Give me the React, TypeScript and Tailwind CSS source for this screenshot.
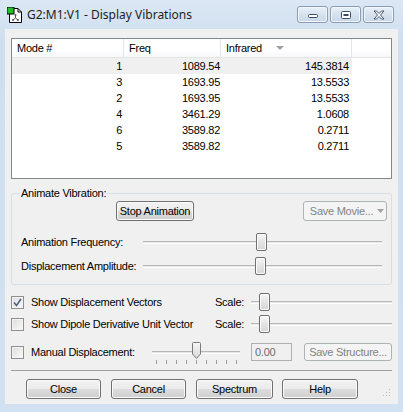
const rows = [
  ["1", "1089.54", "145.3814"],
  ["3", "1693.95", "13.5533"],
  ["2", "1693.95", "13.5533"],
  ["4", "3461.29", "1.0608"],
  ["6", "3589.82", "0.2711"],
  ["5", "3589.82", "0.2711"],
];

const Button = ({
  children,
  className = "",
  disabled = false,
}: {
  children: React.ReactNode;
  className?: string;
  disabled?: boolean;
}) => (
  <div
    className={`flex items-center justify-center rounded-[3px] border ${
      disabled
        ? "border-[#adb2b5] bg-[#f4f4f4] text-[#838383]"
        : "border-[#707070] bg-[linear-gradient(#f2f2f2_0%,#ebebeb_49%,#dddddd_50%,#cfcfcf_100%)] shadow-[inset_0_0_0_1px_#fbfbfb] text-black"
    } ${className}`}
  >
    {children}
  </div>
);

const Thumb = ({ className = "" }: { className?: string }) => (
  <div
    className={`absolute top-0 h-[18px] w-[11px] rounded-[2px] border border-[#707070] bg-[linear-gradient(#f6f6f6,#e4e4e4_50%,#d6d6d6)] shadow-[inset_0_0_0_1px_#fdfdfd] ${className}`}
  />
);

const Track = () => (
  <div className="h-[3px] w-full border-t border-[#b7b7b7] border-b border-b-white bg-[#e7e7e7]" />
);

const Slider = ({ thumb, className = "" }: { thumb: string; className?: string }) => (
  <div className={`relative flex h-[18px] items-center ${className}`}>
    <Track />
    <Thumb className={thumb} />
  </div>
);

const CheckBox = ({ checked = false }: { checked?: boolean }) => (
  <div className="flex h-[13px] w-[13px] shrink-0 items-center justify-center border border-[#8e8f8f] bg-[linear-gradient(135deg,#dcdcdc,#fbfbfb)] shadow-[inset_0_0_0_1px_#f4f4f4]">
    {checked && (
      <svg width="9" height="9" viewBox="0 0 9 9">
        <path d="M1 4.5 L3.5 7.5 L8 1" fill="none" stroke="#4d6185" strokeWidth="1.6" />
      </svg>
    )}
  </div>
);

const TitleButton = ({ children }: { children: React.ReactNode }) => (
  <div className="flex h-[17px] w-[31px] items-center justify-center rounded-[3px] border border-[#8a9bb2] bg-[linear-gradient(#e9f0f8,#d6e2ef_50%,#c8d7e8)] shadow-[inset_0_0_0_1px_#f3f7fb]">
    {children}
  </div>
);

const AppIcon = () => (
  <svg width="16" height="16" viewBox="0 0 16 16">
    <path d="M2.5 1.5 H11 L14.5 5 V15.5 H2.5 Z" fill="#fff" stroke="#000" />
    <path d="M11 1.5 V5 H14.5" fill="none" stroke="#000" />
    <rect x="0" y="0" width="7" height="7" fill="#22c022" stroke="#000" strokeWidth="1" />
    <path d="M8.5 8 V11 M8.5 11 L6 13 M8.5 11 L11 13" stroke="#555" strokeWidth="1" fill="none" />
    <circle cx="8.5" cy="8" r="1" fill="#555" />
    <circle cx="6" cy="13" r="1" fill="#555" />
    <circle cx="11" cy="13" r="1" fill="#555" />
  </svg>
);

const App = () => {
  return (
    <div className="flex h-[412px] w-[403px] flex-col bg-[linear-gradient(#dbe7f4,#cfdff0_40px,#d2e1f1)] font-['Liberation_Sans',Arial,sans-serif] text-[11px] tracking-[-0.25px] text-black">
      {/* title bar */}
      <div className="flex h-[29px] items-center pl-[7px] pr-[9px]">
        <AppIcon />
        <span className="ml-[4px] font-['Noto_Sans',sans-serif] text-[12px] tracking-normal text-[#1e1e1e]">
          G2:M1:V1 - Display Vibrations
        </span>
        <div className="ml-auto flex gap-[2px]">
          <TitleButton>
            <svg width="12" height="8" viewBox="0 0 12 8">
              <rect x="1.5" y="3.5" width="9" height="3" rx="1" fill="#fff" stroke="#3a4a63" />
            </svg>
          </TitleButton>
          <TitleButton>
            <svg width="12" height="10" viewBox="0 0 12 10">
              <rect x="1.5" y="1.5" width="9" height="7" rx="1" fill="#fff" stroke="#3a4a63" />
              <rect x="3.5" y="4" width="5" height="2" fill="#3a4a63" />
            </svg>
          </TitleButton>
          <TitleButton>
            <svg width="12" height="10" viewBox="0 0 12 10">
              <path
                d="M1 1 H3.5 L6 3.5 L8.5 1 H11 L7.5 5 L11 9 H8.5 L6 6.5 L3.5 9 H1 L4.5 5 Z"
                fill="#fff"
                stroke="#3a4a63"
                strokeWidth="0.9"
              />
            </svg>
          </TitleButton>
        </div>
      </div>

      {/* client area */}
      <div className="mx-[5px] mb-[8px] flex flex-1 flex-col bg-[#f0f0f0] px-[6px] pt-[9px]">
        {/* mode list */}
        <div className="h-[141px] border border-[#828790] bg-white">
          <div className="flex h-[19px] border-b border-[#e5e5e5] bg-[linear-gradient(#ffffff,#ffffff_60%,#f7f8fa)]">
            <div className="flex w-[112px] items-center border-r border-[#e3e5e8] pl-[5px]">Mode #</div>
            <div className="flex w-[97px] items-center border-r border-[#e3e5e8] pl-[5px]">Freq</div>
            <div className="flex w-[131px] items-center border-r border-[#e3e5e8] pl-[5px]">
              Infrared
              <svg width="8" height="5" viewBox="0 0 8 5" className="ml-[14px]">
                <path d="M0 0 H8 L4 4 Z" fill="#a0a0a0" />
              </svg>
            </div>
          </div>
          {rows.map(([mode, freq, ir], i) => (
            <div
              key={i}
              className={`flex h-[16px] w-[340px] items-center ${i === 0 ? "bg-[#f0f0f0]" : ""}`}
            >
              <div className="w-[112px] pr-[2px] text-right">{mode}</div>
              <div className="w-[97px] pr-[1px] text-right">{freq}</div>
              <div className="w-[131px] pr-[3px] text-right">{ir}</div>
            </div>
          ))}
        </div>

        {/* animate vibration group */}
        <div className="mt-[14px] h-[92px] rounded-[3px] border border-[#d5dfe5]">
          <div className="-mt-[7px] ml-[8px] w-fit bg-[#f0f0f0] px-[1px] leading-[13px]">
            Animate Vibration:
          </div>
          <div className="mt-[1px] flex pr-[4px]">
            <Button className="ml-[104px] h-[20px] w-[78px]">Stop Animation</Button>
            <Button disabled className="ml-auto h-[20px] w-[84px] pl-[4px]">
              <span>Save Movie...</span>
              <svg width="7" height="4" viewBox="0 0 7 4" className="ml-[4px]">
                <path d="M0 0 H7 L3.5 4 Z" fill="#a3a3a3" />
              </svg>
            </Button>
          </div>
          <div className="mt-[12px] flex items-center px-[9px]">
            <span className="w-[122px]">Animation Frequency:</span>
            <Slider className="flex-1" thumb="left-[113px]" />
          </div>
          <div className="mt-[6px] flex items-center px-[9px]">
            <span className="w-[122px]">Displacement Amplitude:</span>
            <Slider className="flex-1" thumb="left-[112px]" />
          </div>
        </div>

        {/* display options */}
        <div className="mt-[8px] flex h-[18px] items-center">
          <div className="flex w-[204px] items-center gap-[7px]">
            <CheckBox checked />
            <span>Show Displacement Vectors</span>
          </div>
          <span className="w-[36px]">Scale:</span>
          <Slider className="flex-1" thumb="left-[8px]" />
        </div>
        <div className="mt-[4px] flex h-[18px] items-center">
          <div className="flex w-[204px] items-center gap-[7px]">
            <CheckBox />
            <span>Show Dipole Derivative Unit Vector</span>
          </div>
          <span className="w-[36px]">Scale:</span>
          <Slider className="flex-1" thumb="left-[8px]" />
        </div>
        <div className="mt-[10px] flex h-[18px] items-center">
          <div className="flex w-[141px] items-center gap-[7px]">
            <CheckBox />
            <span>Manual Displacement:</span>
          </div>
          <div className="relative flex h-[18px] w-[88px] items-center">
            <Track />
            <svg width="11" height="18" viewBox="0 0 11 18" className="absolute left-[39px] top-[-1px]">
              <defs>
                <linearGradient id="mthumb" x1="0" y1="0" x2="0" y2="1">
                  <stop offset="0" stopColor="#f7f7f7" />
                  <stop offset="1" stopColor="#d8d8d8" />
                </linearGradient>
              </defs>
              <path d="M1.5 1.5 Q1.5 0.5 2.5 0.5 H8.5 Q9.5 0.5 9.5 1.5 V12 L5.5 16.5 L1.5 12 Z" fill="url(#mthumb)" stroke="#7a7a7a" />
            </svg>
            <div className="absolute left-[4px] right-[3px] top-[17px] flex justify-between">
              {Array.from({ length: 9 }).map((_, i) => (
                <div key={i} className="h-[4px] w-px bg-[#9a9a9a]" />
              ))}
            </div>
          </div>
          <div className="ml-[11px] flex h-[18px] w-[41px] items-center border border-[#afafaf] bg-[#f0f0f0] pl-[3px] text-[#6d6d6d]">
            0.00
          </div>
          <Button disabled className="ml-auto h-[18px] w-[88px]">
            Save Structure...
          </Button>
        </div>

        <div className="mt-[9px] border-t border-[#a0a0a0]" />

        {/* dialog buttons */}
        <div className="mt-[8px] flex items-start pl-[15px]">
          <Button className="h-[20px] w-[75px]">Close</Button>
          <Button className="ml-[10px] h-[20px] w-[75px]">Cancel</Button>
          <Button className="ml-[10px] h-[20px] w-[77px]">Spectrum</Button>
          <Button className="ml-[9px] h-[20px] w-[76px]">Help</Button>
          <svg width="8" height="8" viewBox="0 0 8 8" className="ml-auto mr-[1px] mt-[10px]">
            <g fill="#b8b8b8">
              <rect x="6" y="0" width="1" height="1" />
              <rect x="3" y="3" width="1" height="1" />
              <rect x="6" y="3" width="1" height="1" />
              <rect x="0" y="6" width="1" height="1" />
              <rect x="3" y="6" width="1" height="1" />
              <rect x="6" y="6" width="1" height="1" />
            </g>
          </svg>
        </div>
      </div>
    </div>
  );
};

export default App;
